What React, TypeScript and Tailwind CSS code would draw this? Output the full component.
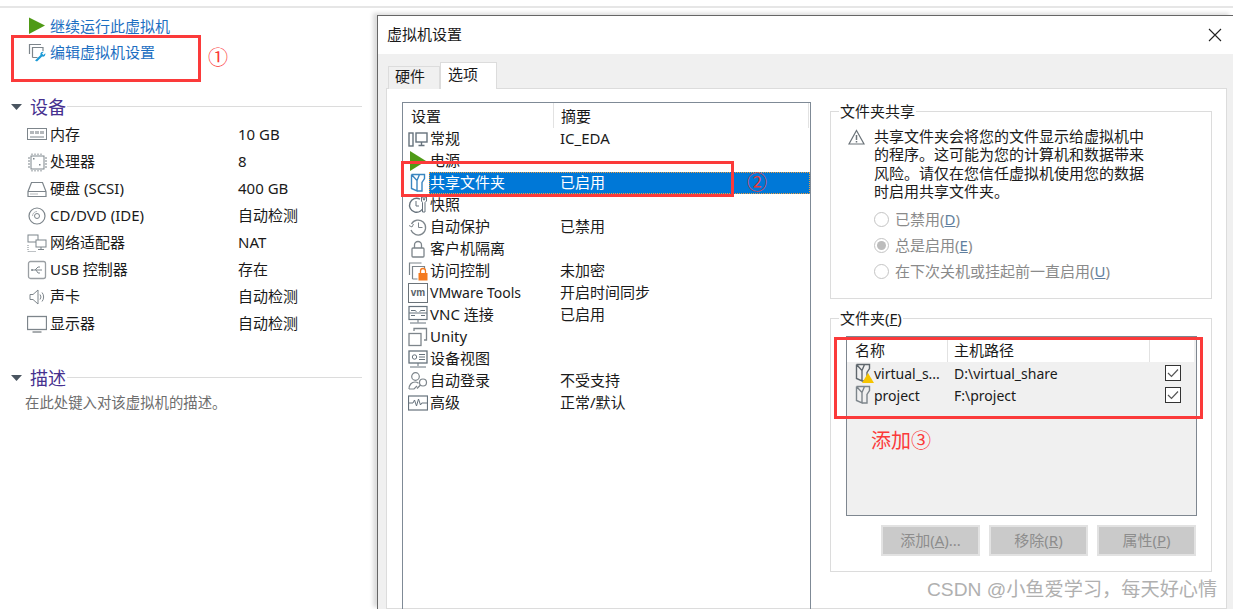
import React from "react";

const G = "#7d858b";
type IP = { c?: string };

const Svg = ({ children, w = 20, h = 20 }: { children: React.ReactNode; w?: number; h?: number }) => (
  <svg width={w} height={h} viewBox={`0 0 ${w} ${h}`} fill="none" className="shrink-0">
    {children}
  </svg>
);

const Play = () => (
  <Svg>
    <path d="M1 1.5 L17 9.5 L1 18 Z" fill="#4f9a16" />
  </Svg>
);
const PlayTall = () => (
  <Svg>
    <path d="M2 0 L18 10 L2 20 Z" fill="#4f9a16" />
  </Svg>
);
const EditIcon = () => (
  <Svg>
    <path d="M1.5 12V2.5H13M4.5 15.5V5.5H15V9M4.5 15.5h5" stroke={G} strokeWidth="1.2" />
    <path d="M7 18.5l5.5-5.5c-.6-2 1-3.8 3.3-3.2l-1.8 1.8 1.4 1.4 1.9-1.8c.5 2.3-1.3 3.9-3.2 3.3L9 19.5z" fill="#1c9ad6" />
  </Svg>
);
const Mem = () => (
  <Svg>
    <rect x="0.5" y="3.5" width="19" height="11" stroke={G} />
    <path d="M3 6h4v3H3zM8 6h4v3H8zM13 6h4v3h-4z" fill="#b4b8bb" />
    <path d="M3 12h14" stroke={G} />
  </Svg>
);
const Cpu = () => (
  <Svg>
    <rect x="4" y="4" width="13" height="13" stroke={G} />
    <path d="M5 1.5v1.5M8 1.5v1.5M11 1.5v1.5M14 1.5v1.5M5 18v1.5M8 18v1.5M11 18v1.5M14 18v1.5M1 6h2M1 9h2M1 12h2M1 15h2M18 6h2M18 9h2M18 12h2M18 15h2" stroke={G} />
    <rect x="6" y="6" width="1.5" height="1.5" fill={G} />
    <rect x="12" y="12" width="1.5" height="1.5" fill={G} />
  </Svg>
);
const Disk = () => (
  <Svg>
    <path d="M1 12.5L4.5 3.5H15.5L19 12.5V17.5H1Z M1 12.5H19" stroke={G} strokeWidth="1.2" />
    <path d="M3 15h8" stroke="#b4b8bb" />
  </Svg>
);
const Cd = () => (
  <Svg>
    <circle cx="10" cy="10" r="8" stroke={G} strokeWidth="1.2" />
    <circle cx="10" cy="10" r="2.5" stroke={G} />
    <path d="M5.5 10a4.5 4.5 0 0 1 4.5-4.5" stroke="#b4b8bb" />
  </Svg>
);
const Net = () => (
  <Svg>
    <rect x="1" y="2" width="10" height="7" stroke={G} />
    <rect x="9" y="7" width="10" height="7" fill="#fff" stroke={G} />
    <path d="M14 14v2M11 16.5h6" stroke={G} />
    <path d="M1 12v6.5h8" stroke={G} strokeDasharray="1 1" />
  </Svg>
);
const Usb = () => (
  <Svg>
    <rect x="1.5" y="1.5" width="17" height="17" rx="2" stroke="#9a9fa3" strokeWidth="1.3" />
    <path d="M5 10h10M8 10l3-3h2M9 10l2 3h2" stroke={G} />
    <circle cx="5" cy="10" r="1" fill={G} />
  </Svg>
);
const Sound = () => (
  <Svg>
    <path d="M3 7.5h3L11 3v14l-5-4.5H3z" stroke={G} />
    <path d="M13 7.5a4 4 0 0 1 0 5M15 5.5a7 7 0 0 1 0 9" stroke={G} />
  </Svg>
);
const Monitor = () => (
  <Svg>
    <rect x="0.5" y="2.5" width="19" height="13" stroke={G} strokeWidth="1.3" />
    <path d="M5.5 18h9" stroke="#a8acaf" strokeWidth="2" />
  </Svg>
);
const General = () => (
  <Svg>
    <rect x="1" y="4" width="4" height="13" stroke="#66727c" strokeWidth="1.4" />
    <rect x="8" y="4" width="11" height="9" stroke="#66727c" strokeWidth="1.4" />
    <path d="M13.5 13v3M10.5 16.5h6" stroke="#66727c" strokeWidth="1.4" />
  </Svg>
);
const Folder = ({ c = G }: IP) => (
  <Svg>
    <path d="M3.5 1.5H16.5V5.5L14 9.5V18H8.5M3.5 1.5V15.5L9 18V7.5L3.5 1.5M9 7.5L11.5 1.5" stroke={c} strokeWidth="1.4" />
  </Svg>
);
const Snap = () => (
  <Svg>
    <path d="M12 4.2A7 7 0 1 0 15.5 11" stroke="#66727c" strokeWidth="1.4" />
    <path d="M8 6v5h3" stroke="#66727c" />
    <path d="M13.5 2h1.5l.5 3h1l.5-3h1.5v4l-1.5 1.5V17h-2.5V7.5L13.5 6z" stroke="#66727c" fill="#fff" />
  </Svg>
);
const Clock = () => (
  <Svg>
    <path d="M3.5 7A7.5 7.5 0 1 1 3 13" stroke={G} strokeWidth="1.3" />
    <path d="M1 8.5l3 1.5 1.5-3" stroke={G} />
    <path d="M10.5 5.5v5h4" stroke={G} />
  </Svg>
);
const Lock = () => (
  <Svg>
    <rect x="4" y="9" width="12" height="9" rx="1" stroke={G} strokeWidth="1.3" />
    <path d="M6.5 9V6a3.5 3.5 0 0 1 7 0v3" stroke={G} strokeWidth="1.3" />
  </Svg>
);
const Access = () => (
  <Svg>
    <path d="M1.5 14V2h12M4.5 18V5.5h12V8M4.5 18h5" stroke={G} strokeWidth="1.2" />
    <rect x="10.5" y="12" width="9" height="7.5" fill="#f47a1f" />
    <path d="M12.5 12V10a2.5 2.5 0 0 1 5 0v2" stroke="#f47a1f" strokeWidth="1.3" />
  </Svg>
);
const Vm = () => (
  <div className="w-[20px] h-[20px] shrink-0 border border-[#6b7379] flex items-center justify-center text-[10px] leading-none font-bold text-[#5a6268] font-['Liberation_Sans',sans-serif]">
    vm
  </div>
);
const Vnc = () => (
  <Svg>
    <rect x="1" y="1.5" width="18" height="13" stroke="#66727c" strokeWidth="1.2" />
    <path d="M1 8h18M3 5.5h4l1.5 1M17 5.5h-4l-1.5 1M3 10.5h4M17 10.5h-4M10 14.5v3M2 18h16" stroke="#66727c" />
  </Svg>
);
const Unity = () => (
  <Svg>
    <rect x="1" y="6.5" width="12" height="12" stroke={G} strokeWidth="1.3" />
    <path d="M6 4V1.5h12.5V13H16" stroke={G} strokeWidth="1.3" />
  </Svg>
);
const DevView = () => (
  <Svg>
    <rect x="1" y="2" width="18" height="12" stroke="#66727c" strokeWidth="1.3" />
    <circle cx="6.5" cy="8" r="2.2" stroke="#66727c" />
    <path d="M11 5.5h6M11 8h6M11 10.5h6M10 14v3M2 18h16" stroke="#66727c" />
  </Svg>
);
const AutoLogin = () => (
  <Svg>
    <circle cx="7.5" cy="5.5" r="3.8" stroke={G} strokeWidth="1.2" />
    <path d="M1 18c0-4 2.5-7 6-7 1.5 0 2.5.5 3.5 1.2M1 18h5l3-3" stroke={G} strokeWidth="1.2" />
    <circle cx="15" cy="11.5" r="3.5" stroke={G} strokeWidth="1.2" />
    <path d="M12.5 14L9 17.5" stroke={G} strokeWidth="1.2" />
  </Svg>
);
const Adv = () => (
  <Svg>
    <rect x="0.5" y="3" width="19" height="14" stroke="#66727c" strokeWidth="1.2" />
    <path d="M1 10h4l1.5-3 2 6 2-7 2 6 1.2-2H19" stroke="#66727c" />
  </Svg>
);
const Warn = () => (
  <svg width="17" height="16" viewBox="0 0 17 16" fill="none" className="shrink-0">
    <path d="M8.5 1.5L16 15H1Z" stroke="#6b7379" strokeWidth="1.2" />
    <path d="M8.5 6v5M8.5 12v1.6" stroke="#6b7379" strokeWidth="1.5" />
  </svg>
);
const Tri = () => (
  <svg width="11" height="6" viewBox="0 0 11 6" className="shrink-0">
    <path d="M0 0h11L5.5 6z" fill="#4a5560" />
  </svg>
);
const FolderWarn = () => (
  <div className="relative w-[20px] h-[20px] shrink-0">
    <Folder c="#5f676d" />
    <svg width="12" height="10" viewBox="0 0 12 10" className="absolute left-[9px] top-[10px]">
      <path d="M6 0l6 10H0z" fill="#f5c400" />
    </svg>
  </div>
);
const Check = () => (
  <div className="w-[16px] h-[16px] border border-[#333] bg-white flex items-center justify-center">
    <svg width="12" height="10" viewBox="0 0 12 10" fill="none">
      <path d="M1 5l3.5 3.5L11 1.5" stroke="#555" strokeWidth="1.2" />
    </svg>
  </div>
);

const hwRows: [React.ReactNode, string, string][] = [
  [<Mem />, "内存", "10 GB"],
  [<Cpu />, "处理器", "8"],
  [<Disk />, "硬盘 (SCSI)", "400 GB"],
  [<Cd />, "CD/DVD (IDE)", "自动检测"],
  [<Net />, "网络适配器", "NAT"],
  [<Usb />, "USB 控制器", "存在"],
  [<Sound />, "声卡", "自动检测"],
  [<Monitor />, "显示器", "自动检测"],
];

const optRows: [React.ReactNode, string, string][] = [
  [<General />, "常规", "IC_EDA"],
  [<PlayTall />, "电源", ""],
  [<Folder c="#3a86c0" />, "共享文件夹", "已启用"],
  [<Snap />, "快照", ""],
  [<Clock />, "自动保护", "已禁用"],
  [<Lock />, "客户机隔离", ""],
  [<Access />, "访问控制", "未加密"],
  [<Vm />, "VMware Tools", "开启时间同步"],
  [<Vnc />, "VNC 连接", "已启用"],
  [<Unity />, "Unity", ""],
  [<DevView />, "设备视图", ""],
  [<AutoLogin />, "自动登录", "不受支持"],
  [<Adv />, "高级", "正常/默认"],
];

const Heading = ({ t }: { t: string }) => (
  <div className="flex items-center h-[24px] pl-[11px] pr-[15px]">
    <Tri />
    <span className="ml-[8px] text-[18px] leading-[24px] text-[#46308f]">{t}</span>
    <div className="flex-1 h-px bg-[#dcdcdc] ml-[1px] -mt-[2px]" />
  </div>
);

const Radio = ({ label, k, on }: { label: string; k: string; on?: boolean }) => (
  <div className="flex items-center h-[26px] gap-[6px] text-[15px] text-[#8a8a8a]">
    <div className="w-[15px] h-[15px] rounded-full border border-[#c4c4c4] bg-white flex items-center justify-center">
      {on && <div className="w-[9px] h-[9px] rounded-full bg-[#bcbcbc]" />}
    </div>
    <span>
      {label}(<span className="underline text-[#5f7f9f]">{k}</span>)
    </span>
  </div>
);

const Btn = ({ label, k, suffix = "" }: { label: string; k: string; suffix?: string }) => (
  <div className="w-[99px] h-[31px] bg-[#cacaca] border-2 border-[#e2e2e2] flex items-center justify-center text-[15px] text-[#8d8d8d]">
    {label}(<span className="underline">{k}</span>){suffix}
  </div>
);

export default function App() {
  return (
    <div className="relative w-[1233px] h-[609px] overflow-hidden bg-white flex flex-col text-[#1a1a1a] font-['Noto_Sans','Noto_Sans_CJK_SC',sans-serif]">
      <div className="h-[6px] shrink-0" />
      <div className="h-[2px] shrink-0 bg-[#e6e6e6]" />
      <div className="flex flex-1 min-h-0">
        <aside className="w-[377px] shrink-0 flex flex-col pt-[5px]">
          <div className="flex items-center h-[26px] pl-[28px] text-[15px] text-[#1d6fc2]">
            <Play />
            <span className="ml-[2px]">继续运行此虚拟机</span>
          </div>
          <div className="flex items-center h-[26px] pl-[28px] text-[15px] text-[#1d6fc2]">
            <EditIcon />
            <span className="ml-[2px]">编辑虚拟机设置</span>
          </div>
          <div className="mt-[30px]">
            <Heading t="设备" />
          </div>
          <div className="mt-[2px]">
            {hwRows.map(([icon, a, b]) => (
              <div key={a} className="flex items-center h-[27px] pl-[27px] text-[15px]">
                <div className="w-[23px] flex">{icon}</div>
                <span className="w-[188px] pb-[1px]">{a}</span>
                <span className="pb-[1px]">{b}</span>
              </div>
            ))}
          </div>
          <div className="mt-[29px]">
            <Heading t="描述" />
          </div>
          <div className="mt-[3px] pl-[25px] h-[20px] leading-[20px] text-[14.4px] text-[#6e6e6e]">
            在此处键入对该虚拟机的描述。
          </div>
        </aside>

        <main className="flex-1 mt-[7px] flex flex-col border-l border-t border-[#666] shadow-[-4px_-2px_4px_rgba(0,0,0,0.14)] bg-white">
          <div className="h-[38px] shrink-0 flex items-center justify-between pl-[9px] pr-[11px] text-[15px]">
            <span className="-mt-[2px]">虚拟机设置</span>
            <svg width="14" height="14" viewBox="0 0 14 14" fill="none">
              <path d="M1 1l12 12M13 1L1 13" stroke="#222" strokeWidth="1.1" />
            </svg>
          </div>
          <div className="flex-1 min-h-0 bg-[#f0f0f0] pl-[8px] pr-[6px] flex flex-col">
            <div className="h-[35px] shrink-0 flex items-end pl-[2px] text-[15px] relative z-10 -mb-px">
              <div className="w-[52px] h-[23px] bg-[#f0f0f0] border border-b-0 border-[#dcdcdc] flex items-center pl-[6px] pb-[3px]">
                硬件
              </div>
              <div className="w-[57px] h-[27px] bg-white border border-b-0 border-[#dcdcdc] flex items-center pl-[7px] pb-[3px]">
                选项
              </div>
            </div>
            <div className="flex-1 min-h-0 bg-white border border-[#dcdcdc] pl-[15px] pr-[13px] pt-[13px] flex gap-[19px]">
              <div className="w-[409px] shrink-0 border border-[#7f8a96] -mb-[20px]">
                <div className="flex h-[25px] items-center text-[15px]">
                  <span className="w-[151px] pl-[8px] pt-[1px] h-full flex items-center border-r border-[#e2e2e2]">设置</span>
                  <span className="flex-1 pl-[7px] pt-[1px] h-full flex items-center border-r border-[#e2e2e2] mr-[1px]">摘要</span>
                </div>
                {optRows.map(([icon, a, b], i) => {
                  const sel = i === 2;
                  return (
                    <div key={a} className="flex items-center h-[22px] pl-[5px] text-[15px]">
                      <div className="w-[20px] h-[20px] flex shrink-0">{icon}</div>
                      <div
                        className={
                          sel
                            ? "flex-1 flex items-center h-[22px] ml-[1px] pl-[1px] pb-[2px] bg-[#0078d7] text-white outline-1 outline-dotted -outline-offset-1 outline-[#f0a040]"
                            : "flex-1 flex items-center h-[22px] ml-[1px] pl-[1px] pb-[2px]"
                        }
                      >
                        <span className={a === "VMware Tools" ? "w-[130px] text-[14px]" : "w-[130px]"}>{a}</span>
                        <span>{b}</span>
                      </div>
                    </div>
                  );
                })}
              </div>

              <div className="w-[382px] shrink-0 flex flex-col gap-[10px]">
                <fieldset className="h-[197px] border border-[#dcdcdc]">
                  <legend className="ml-[8px] px-[1px] text-[15px] leading-[18px]">文件夹共享</legend>
                  <div className="flex pl-[17px] pt-[7px]">
                    <div className="w-[26px] pt-[2px]">
                      <Warn />
                    </div>
                    <div className="w-[280px] text-[15px] leading-[18.4px]">
                      共享文件夹会将您的文件显示给虚拟机中的程序。这可能为您的计算机和数据带来风险。请仅在您信任虚拟机使用您的数据时启用共享文件夹。
                    </div>
                  </div>
                  <div className="pl-[43px] mt-[6px]">
                    <Radio label="已禁用" k="D" />
                    <Radio label="总是启用" k="E" on />
                    <Radio label="在下次关机或挂起前一直启用" k="U" />
                  </div>
                </fieldset>

                <fieldset className="h-[263px] border border-[#dcdcdc]">
                  <legend className="ml-[8px] px-[1px] text-[15px] leading-[18px]">
                    文件夹(<span className="underline">F</span>)
                  </legend>
                  <div className="ml-[15px] mt-[9px] w-[351px] h-[180px] border border-[#7f8790] bg-[#f0f0f0]">
                    <div className="flex h-[25px] bg-white text-[15px] mr-[2px]">
                      <span className="w-[101px] pl-[8px] pt-[1px] flex items-center border-r border-[#e2e2e2]">名称</span>
                      <span className="w-[202px] pl-[6px] pt-[1px] flex items-center border-r border-[#e2e2e2]">主机路径</span>
                    </div>
                    {[
                      { n: "virtual_s...", p: "D:\\virtual_share", icon: <FolderWarn /> },
                      { n: "project", p: "F:\\project", icon: <Folder /> },
                    ].map((r) => (
                      <div key={r.n} className="flex items-center h-[22px] text-[14px]">
                        <div className="w-[107px] flex items-center pl-[6px] gap-[1px]">
                          {r.icon}
                          <span className="whitespace-nowrap">{r.n}</span>
                        </div>
                        <span className="w-[211px] whitespace-nowrap">{r.p}</span>
                        <Check />
                      </div>
                    ))}
                  </div>
                  <div className="mt-[9px] ml-[50px] flex gap-[9px]">
                    <Btn label="添加" k="A" suffix="..." />
                    <Btn label="移除" k="R" />
                    <Btn label="属性" k="P" />
                  </div>
                </fieldset>
              </div>
            </div>
          </div>
        </main>
      </div>

      {/* 标注 */}
      <div className="absolute left-[11px] top-[35px] w-[190px] h-[47px] border-[3px] border-[#fb3a3a]" />
      <div className="absolute left-[208px] top-[44px] text-[20px] leading-[28px] text-[#fb3a3a]">①</div>
      <div className="absolute left-[401px] top-[161px] w-[333px] h-[36px] border-[3px] border-[#fb3a3a]" />
      <div className="absolute left-[747px] top-[170px] text-[20px] leading-[26px] text-[#e8383a]">②</div>
      <div className="absolute left-[834px] top-[337px] w-[369px] h-[82px] border-[3px] border-[#fb3a3a]" />
      <div className="absolute left-[871px] top-[427px] text-[20px] leading-[28px] text-[#fb3a3a]">添加③</div>
      <div className="absolute left-[927px] top-[578px] text-[19.2px] leading-[24px] whitespace-nowrap text-[#b0b0b0] font-['Liberation_Sans','Noto_Sans_CJK_SC',sans-serif]">
        CSDN @小鱼爱学习，每天好心情
      </div>
    </div>
  );
}
